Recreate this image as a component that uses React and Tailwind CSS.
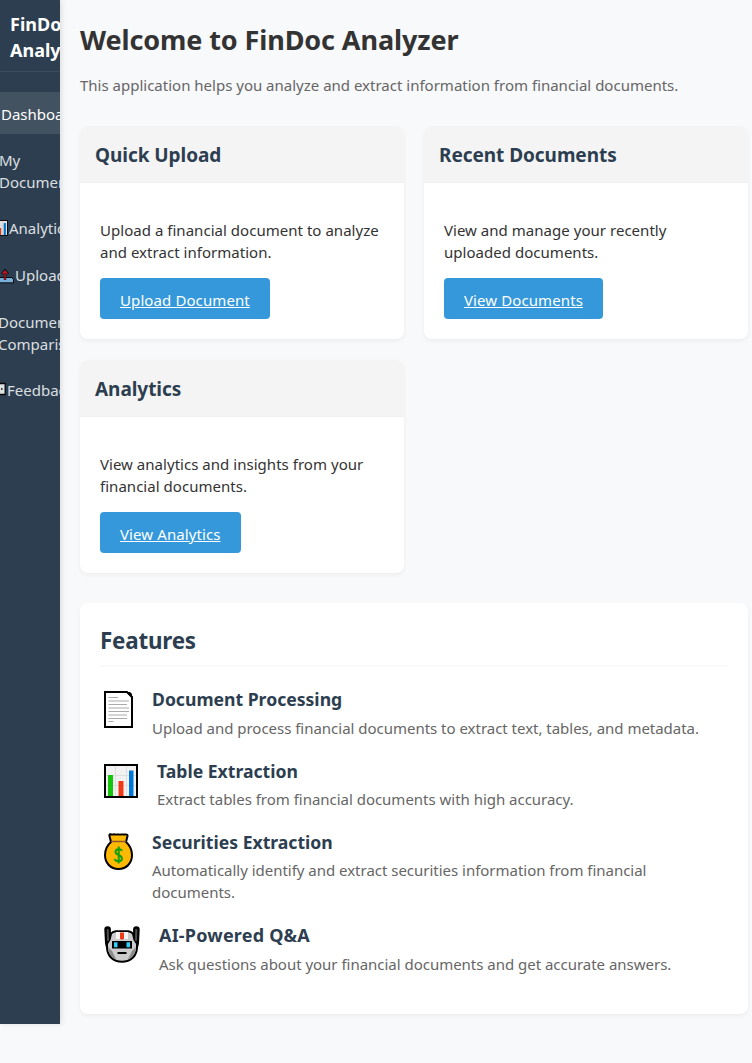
function PageIcon() {
  return (
    <svg className="block" width="29" height="37" viewBox="0 0 29 37">
      <path d="M1 1H23L28 6V36H1Z" fill="#fff" stroke="#000" strokeWidth="2" />
      <path d="M22 1L28 7V3L26 1Z" fill="#000" />
      <path d="M4.500 6.500H14M4.500 10H25M4.500 13.500H23M4.500 17H25M4.500 20.500H25M4.500 24H23M4.500 27.500H23M4.500 30.500H9.500" stroke="#aaa" strokeWidth="1.1" />
    </svg>
  );
}

function ChartIcon({ size = 34 }) {
  return (
    <svg className="block" width={size} height={size} viewBox="0 0 34 34">
      <rect x="1" y="1" width="32" height="32" fill="#f2f2f2" stroke="#000" strokeWidth="2" />
      <path d="M2 11.500H32M2 21.500H32M11.500 2V32M22.500 2V32" stroke="#dfdfdf" />
      <rect x="4" y="11" width="5" height="21" fill="#16c60c" />
      <rect x="14.500" y="17" width="5" height="15" fill="#f03a17" />
      <rect x="25" y="6.500" width="4.500" height="25.500" fill="#0078d7" />
    </svg>
  );
}

function MoneyIcon() {
  return (
    <svg className="block" width="29" height="37" viewBox="0 0 29 37">
      <path d="M5.500 3C5 0.800 6.500 1 7.500 1.500C8.500 2 9.500 1 11 1.500C12.500 2 13.500 1 15 1.500C16.500 2 17.500 1 19 1.500C20.500 2 24 0.500 23.500 3L22 9C25.500 12 28 16.500 28 22C28 30 22.500 36 14.500 36S1 30 1 22C1 16.500 3.500 12 7 9Z" fill="#ffb900" stroke="#000" strokeWidth="2" strokeLinejoin="round" />
      <path d="M7 8.500H22" stroke="#8e562e" strokeWidth="1.500" />
      <path d="M18 18C17 15.500 11.500 15.500 11.500 19C11.500 22.500 18 21.500 18 25.500C18 29 11.500 29 10.800 26M14.700 13.500V30.500" fill="none" stroke="#10a010" strokeWidth="2" />
    </svg>
  );
}

function RobotIcon() {
  return (
    <svg className="block" width="36" height="37" viewBox="0 0 36 37">
      <path d="M0.300 3.500A3.300 3.300 0 0 1 6.900 3.500V6.500C9 4.700 11 4.300 13 4.300H23C25 4.300 27 4.700 29.100 6.500V3.500A3.300 3.300 0 0 1 35.700 3.500L35 17C35 19 34 20 34 22C33.500 31 27 36.800 18 36.800S2.500 31 2 22C2 20 1 19 1 17Z" fill="#000" />
      <path d="M3.700 4L4 14M32.300 4L32 14" stroke="#505050" strokeWidth="2" strokeLinecap="round" />
      <path d="M8 8C10 6.500 12 6 14 6H22C24 6 26 6.500 28 8L29.500 14L32 18V23C31 30 25.500 34.800 18 34.800S5 30 4 23V18L6.500 14Z" fill="#ccc" />
      <path d="M4 21L8 25L12 33C7 31 4.500 27 4 21ZM32 21L28 25L24 33C29 31 31.500 27 32 21Z" fill="#8b8b8b" />
      <path d="M12 6H24V13H12Z" fill="#f4f4f4" />
      <path d="M16 6.500H20V12.500L19 13.500H17L16 12.500Z" fill="#f03a17" />
      <path d="M8 15H28V22.500H8Z" fill="#000" />
      <path d="M10 16.300H13.500V21.300H10ZM22.500 16.300H26V21.300H22.500Z" fill="#31d2f7" />
      <path d="M13.500 27H22.500" stroke="#000" strokeWidth="2" />
    </svg>
  );
}

function OutboxIcon() {
  return (
    <svg className="block" width="18" height="16" viewBox="0 0 18 16">
      <path d="M0.500 10.500L2.500 8.500H15.500L17.500 10.500V14H0.500Z" fill="#83beec" stroke="#000" />
      <path d="M0.500 14H17.500" stroke="#22303c" strokeWidth="1.500" />
      <path d="M9 11V3M6 5L9 1.500L12 5" fill="none" stroke="#000" strokeWidth="2.400" />
      <path d="M9 11V3M6.500 4.800L9 2L11.500 4.800" fill="none" stroke="#d01828" strokeWidth="1.300" />
    </svg>
  );
}

function SpeechIcon() {
  return (
    <svg className="block" width="16" height="16" viewBox="0 0 16 16">
      <path d="M1 1.500H15.200V12.500H7L4 15.300V12.500H1Z" fill="#f2f2f2" stroke="#000" strokeWidth="1.300" />
      <path d="M4 7H5.500M7.500 7H9M11 7H12.500" stroke="#000" strokeWidth="1.500" />
    </svg>
  );
}

function NavItem({ children, className = '' }) {
  return <div className={`flex w-[180px] items-start text-[#ecf0f1] opacity-90 ${className}`}>{children}</div>;
}

function Sidebar() {
  return (
    <aside className="h-[1024px] w-[60px] shrink-0 overflow-hidden bg-[#2c3e50] text-white">
      <div className="h-[72px] border-b border-[#3a4c5e] pt-[11px] pl-[10px] text-[18px] leading-[26px] font-bold">
        <div>FinDoc</div>
        <div>Analyzer</div>
      </div>
      <nav className="pt-[20px]">
        <div className="h-[42px] bg-[#435261] pt-[11px] pl-px whitespace-nowrap">Dashboard</div>
        <NavItem className="mt-[15px] -ml-px h-[44px]"><span>My<br />Documents</span></NavItem>
        <NavItem className="mt-[24px] -ml-[8px] h-[22px]"><span className="mt-[3px] mr-px"><ChartIcon size={16} /></span>Analytics</NavItem>
        <NavItem className="mt-[25px] -ml-[4px] h-[22px]"><span className="mt-[5px] mr-px"><OutboxIcon /></span>Upload</NavItem>
        <NavItem className="mt-[25px] -ml-[2px] h-[44px]"><span>Document<br />Comparison</span></NavItem>
        <NavItem className="mt-[24px] -ml-[10px] h-[22px]"><span className="mt-[3px] mr-px"><SpeechIcon /></span>Feedback</NavItem>
      </nav>
    </aside>
  );
}

function Card({ title, lines, action, actionClass }) {
  return (
    <section className="h-[213px] overflow-hidden rounded-lg bg-white shadow-[0_2px_4px_rgba(0,0,0,0.05)]">
      <header className="h-[57px] border-b border-[#f0f0f0] bg-[#f4f4f4] pt-[16px] pl-[15px]">
        <h2 className="text-[19px] leading-[27px] font-bold tracking-[-0.05px] text-[#2c3e50]">{title}</h2>
      </header>
      <div className="px-5 pt-9">
        {lines.map((text) => (
          <p key={text} className="tracking-[0.03px] whitespace-nowrap">{text}</p>
        ))}
        <a className={`mt-[15px] flex h-[41px] items-start rounded bg-[#3498db] pt-[11px] pl-5 tracking-[0.1px] whitespace-nowrap text-white underline ${actionClass}`}>{action}</a>
      </div>
    </section>
  );
}

function Feature({ icon, title, lines, className = '', iconClass, titleClass, textClass }) {
  return (
    <div className={`mt-5 flex items-start pl-1 ${className}`}>
      <div className={`shrink-0 ${iconClass}`}>{icon}</div>
      <div className="ml-[19px]">
        <h3 className={`leading-[25px] font-bold text-[#2c3e50] ${titleClass}`}>{title}</h3>
        <div className={`tracking-[-0.02px] text-[#666] ${textClass}`}>
          {lines.map((text) => (
            <p key={text} className="whitespace-nowrap">{text}</p>
          ))}
        </div>
      </div>
    </div>
  );
}

export default function App() {
  return (
    <div className="flex h-[1063px] w-[752px] overflow-hidden bg-[#f8f9fb] font-['Noto_Sans',sans-serif] text-[15px] leading-[22px] text-[#333]">
      <div className="h-[1024px] shrink-0 shadow-[2px_0_5px_rgba(0,0,0,0.1)]"><Sidebar /></div>
      <main className="w-[692px] shrink-0 pr-1 pl-5">
        <h1 className="pt-[20px] text-[27px] leading-[39px] font-bold tracking-[-0.1px] whitespace-nowrap">Welcome to FinDoc Analyzer</h1>
        <p className="mt-[15px] whitespace-nowrap text-[#666]">This application helps you analyze and extract information from financial documents.</p>
        <div className="mt-[30px] grid grid-cols-2 gap-x-5 gap-y-[21px]">
          <Card title="Quick Upload" action="Upload Document" actionClass="w-[170px]"
            lines={['Upload a financial document to analyze', 'and extract information.']} />
          <Card title="Recent Documents" action="View Documents" actionClass="w-[159px]"
            lines={['View and manage your recently', 'uploaded documents.']} />
          <Card title="Analytics" action="View Analytics" actionClass="w-[141px]"
            lines={['View analytics and insights from your', 'financial documents.']} />
        </div>
        <section className="mt-[30px] h-[411px] rounded-lg bg-white px-5 pt-5 shadow-[0_2px_4px_rgba(0,0,0,0.05)]">
          <h2 className="h-[44px] border-b-2 border-[#f8f9fa] text-[22.4px] leading-[35px] font-bold tracking-[-0.2px] text-[#2c3e50]">Features</h2>
          <Feature icon={<PageIcon />} iconClass="mt-1" title="Document Processing" titleClass="text-[17.6px]" textClass="mt-[5px]"
            lines={['Upload and process financial documents to extract text, tables, and metadata.']} />
          <Feature icon={<ChartIcon />} iconClass="mt-[5px]" title="Table Extraction" titleClass="text-[17.6px]" textClass="mt-1"
            lines={['Extract tables from financial documents with high accuracy.']} />
          <Feature icon={<MoneyIcon />} iconClass="mt-[3px]" title="Securities Extraction" titleClass="text-[17.6px]" textClass="mt-1"
            lines={['Automatically identify and extract securities information from financial', 'documents.']} />
          <Feature icon={<RobotIcon />} iconClass="mt-[3px]" title="AI-Powered Q&A" titleClass="text-[18px] tracking-[0.2px]" textClass="mt-[5px]"
            lines={['Ask questions about your financial documents and get accurate answers.']} />
        </section>
      </main>
    </div>
  );
}
